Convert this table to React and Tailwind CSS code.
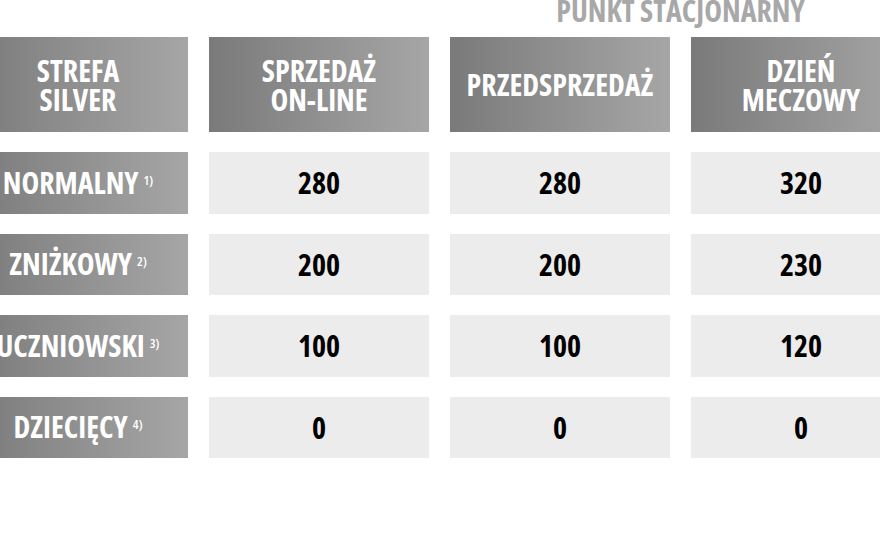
export default function App() {
  const grad = "bg-[linear-gradient(90deg,#7a7a7a_0%,#8e8e8e_45%,#a6a6a6_100%)]";
  const head = `h-[95px] ${grad} flex items-center justify-center text-center text-white text-[30px] font-bold leading-[29px]`;
  const rows = [
    ["NORMALNY", "1)", "280", "280", "320"],
    ["ZNIŻKOWY", "2)", "200", "200", "230"],
    ["UCZNIOWSKI", "3)", "100", "100", "120"],
    ["DZIECIĘCY", "4)", "0", "0", "0"],
  ];
  return (
    <div className="w-[880px] h-[540px] bg-white overflow-hidden relative font-['Open_Sans','DejaVu_Sans_Condensed',sans-serif] [font-stretch:75%]">
      <div className="ml-[-32px] grid grid-cols-[220px_220px_220px_220px] gap-x-[21px] w-[944px]">
        <div className="col-start-3 col-span-2 h-[37px] text-center text-[30px] font-bold leading-[30px] mt-[-4px] mb-[4px] text-[#a8a8a8]">
          PUNKT STACJONARNY
        </div>
        <div className={`col-start-1 ${head}`}>
          <span>STREFA<br />SILVER</span>
        </div>
        <div className={head}>
          <span>SPRZEDAŻ<br />ON-LINE</span>
        </div>
        <div className={head}>
          <span>PRZEDSPRZEDAŻ</span>
        </div>
        <div className={head}>
          <span>DZIEŃ<br />MECZOWY</span>
        </div>
      </div>
      <div className="ml-[-32px] mt-[20px] flex flex-col gap-[20px] w-[944px]">
        {rows.map((r) => (
          <div key={r[0]} className="grid grid-cols-[220px_220px_220px_220px] gap-x-[21px] h-[61.5px]">
            <div className={`${grad} flex items-center justify-center text-white text-[30px] font-bold leading-none`}>
              <span className="relative">
                {r[0]}
                <sup className="text-[13px] font-semibold ml-[5px] relative top-[-9px]">{r[1]}</sup>
              </span>
            </div>
            {r.slice(2).map((v, i) => (
              <div key={i} className="bg-[#ececec] flex items-center justify-center text-black text-[30px] font-bold">
                {v}
              </div>
            ))}
          </div>
        ))}
      </div>
    </div>
  );
}
